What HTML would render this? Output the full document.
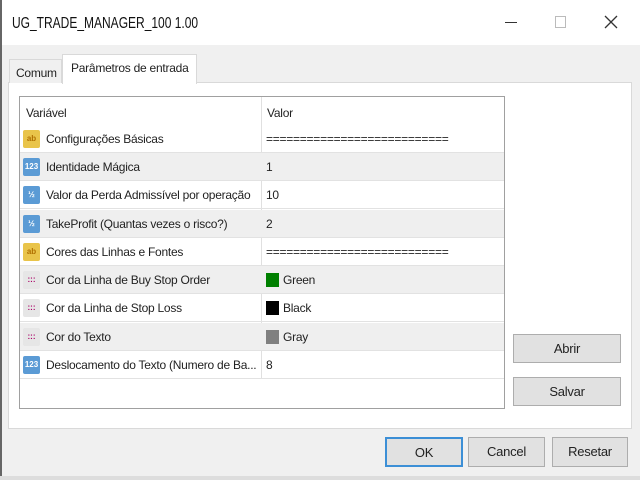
<!DOCTYPE html>
<html><head><style>
*{margin:0;padding:0;box-sizing:border-box}
body{width:640px;height:480px;overflow:hidden;background:#f0f0f0;font-family:"Liberation Sans",sans-serif;font-size:12px;color:#222;position:relative;letter-spacing:-0.25px}
.a{position:absolute}
.title{left:0;top:0;width:640px;height:45px;background:#fff}
.row{position:absolute;left:20px;width:484px;height:28px;border-bottom:1px solid #e2e2e2}
.row.g{background:#efefef}
.row span{position:absolute;top:7px;white-space:nowrap}
.n{left:26px}.v{left:246px}
.ic{position:absolute;left:3px;top:5px;width:17px;height:18px;border-radius:2px;font-size:8px;color:#fff;text-align:center;line-height:18px;font-weight:bold;letter-spacing:0}
.y{background:#e9c44a;color:#b07000}
.b{background:#5b9bd5}
.c{background:#e6e6e6;color:#a06}
.sw{position:absolute;left:246px;top:7px;width:13px;height:14px}
.btn{position:absolute;background:#e1e1e1;border:1px solid #adadad;text-align:center;font-size:13px}
</style></head><body>
<div class="a title"></div>
<div class="a" style="left:0;top:0;width:2px;height:480px;background:#666"></div>
<div class="a" style="left:12px;top:15px;font-size:16px;color:#111;letter-spacing:0;transform:scaleX(0.75);transform-origin:left;white-space:nowrap">UG_TRADE_MANAGER_100 1.00</div>
<div class="a" style="left:505px;top:22px;width:12px;height:1px;background:#333"></div>
<div class="a" style="left:555px;top:16px;width:11px;height:12px;border:1px solid #bbb"></div>
<svg class="a" style="left:604px;top:15px" width="14" height="14"><path d="M1 1L13 13M13 1L1 13" stroke="#333" stroke-width="1.3"/></svg>
<div class="a" style="left:8px;top:82px;width:624px;height:347px;background:#fff;border:1px solid #d9d9d9"></div>
<div class="a" style="left:9px;top:59px;width:53px;height:24px;background:#f0f0f0;border:1px solid #d9d9d9;border-bottom:none;padding:6px 0 0 6px;font-size:12px">Comum</div>
<div class="a" style="left:62px;top:54px;width:135px;height:30px;background:#fff;border:1px solid #d9d9d9;border-bottom:none;padding:6px 0 0 8px;font-size:12px">Parâmetros de entrada</div>
<div class="a" style="left:19px;top:96px;width:486px;height:313px;border:1px solid #a0a0a0;background:#fff"></div>
<div class="a" style="left:261px;top:97px;width:1px;height:282px;background:#e0e0e0"></div>
<div class="a" style="left:26px;top:106px">Variável</div>
<div class="a" style="left:267px;top:106px">Valor</div>
<div class="row" style="top:125px"><div class="ic y">ab</div><span class="n">Configurações Básicas</span><span class="v">===========================</span></div>
<div class="row g" style="top:153px"><div class="ic b">123</div><span class="n">Identidade Mágica</span><span class="v">1</span></div>
<div class="row" style="top:181px"><div class="ic b">½</div><span class="n">Valor da Perda Admissível por operação</span><span class="v">10</span></div>
<div class="row g" style="top:210px"><div class="ic b">½</div><span class="n">TakeProfit (Quantas vezes o risco?)</span><span class="v">2</span></div>
<div class="row" style="top:238px"><div class="ic y">ab</div><span class="n">Cores das Linhas e Fontes</span><span class="v">===========================</span></div>
<div class="row g" style="top:266px"><div class="ic c">:::</div><span class="n">Cor da Linha de Buy Stop Order</span><div class="sw" style="background:#008000"></div><span class="v" style="left:263px">Green</span></div>
<div class="row" style="top:294px"><div class="ic c">:::</div><span class="n">Cor da Linha de Stop Loss</span><div class="sw" style="background:#000"></div><span class="v" style="left:263px">Black</span></div>
<div class="row g" style="top:323px"><div class="ic c">:::</div><span class="n">Cor do Texto</span><div class="sw" style="background:#808080"></div><span class="v" style="left:263px">Gray</span></div>
<div class="row" style="top:351px"><div class="ic b">123</div><span class="n">Deslocamento do Texto (Numero de Ba...</span><span class="v">8</span></div>
<div class="btn" style="left:513px;top:334px;width:108px;height:29px;line-height:27px">Abrir</div>
<div class="btn" style="left:513px;top:377px;width:108px;height:29px;line-height:27px">Salvar</div>
<div class="btn" style="left:385px;top:437px;width:78px;height:30px;line-height:28px;border:2px solid #3c8fd6">OK</div>
<div class="btn" style="left:468px;top:437px;width:77px;height:30px;line-height:28px">Cancel</div>
<div class="btn" style="left:552px;top:437px;width:76px;height:30px;line-height:28px">Resetar</div>
<div class="a" style="left:0;top:476px;width:640px;height:4px;background:#ddd"></div>
</body></html>
